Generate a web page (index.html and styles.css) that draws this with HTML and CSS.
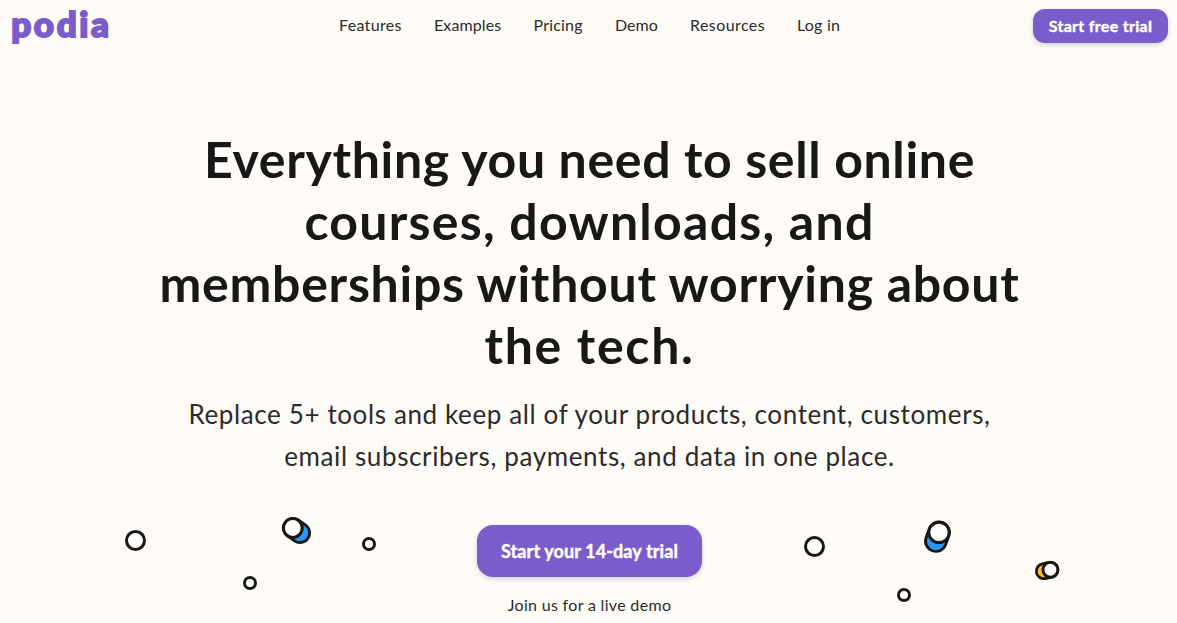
FILE: index.html
```html
<!DOCTYPE html>
<html lang="en">
<head>
<meta charset="utf-8">
<title>Podia</title>
<link rel="stylesheet" href="styles.css">
</head>
<body>
<header class="header">
  <a class="logo" aria-label="podia">
    <svg width="100" height="44" viewBox="0 0 100 44">
      <text class="logo-text" x="0.2" y="36.5" textLength="97.8" lengthAdjust="spacing">podia</text>
    </svg>
  </a>
  <nav class="nav">
    <a class="nav-link features">Features</a>
    <a class="nav-link examples">Examples</a>
    <a class="nav-link pricing">Pricing</a>
    <a class="nav-link demo">Demo</a>
    <a class="nav-link resources">Resources</a>
    <a class="nav-link login">Log in</a>
  </nav>
  <a class="button button-small">Start free trial</a>
</header>
<main class="hero">
  <h1 class="title">
    <span class="line t1">Everything you need to sell online</span>
    <span class="line t2">courses, downloads, and</span>
    <span class="line t3">memberships without worrying about</span>
    <span class="line t4">the tech.</span>
  </h1>
  <p class="subtitle">
    <span class="line">Replace 5+ tools and keep all of your products, content, customers,</span>
    <span class="line">email subscribers, payments, and data in one place.</span>
  </p>
  <a class="button button-large">Start your 14-day trial</a>
  <a class="demo-link">Join us for a live demo</a>
</main>
<svg class="confetti" width="1177" height="123" viewBox="0 500 1177 123" aria-hidden="true">
  <g class="ring">
    <circle cx="135.5" cy="540.5" r="9"/>
    <circle cx="250" cy="583" r="5.5"/>
    <circle cx="369" cy="544" r="5.5"/>
    <circle cx="814.5" cy="546.5" r="9"/>
    <circle cx="904" cy="595" r="5.5"/>
  </g>
  <g class="capsule">
    <path class="edge" stroke-width="22" d="M293.4 528.2 300 533"/>
    <path class="blue" stroke-width="16.4" d="M293.4 528.2 300 533"/>
    <path class="edge" stroke-width="23.6" d="M939 532.4 935.9 541"/>
    <path class="blue" stroke-width="18" d="M939 532.4 935.9 541"/>
    <path class="edge" stroke-width="17.8" d="M1050.4 569.8 1043.8 571.2"/>
    <path class="yellow" stroke-width="12.2" d="M1050.4 569.8 1043.8 571.2"/>
  </g>
  <g class="ring">
    <circle cx="292.8" cy="528" r="9.4"/>
    <circle cx="939" cy="532.4" r="10.2"/>
    <circle cx="1050.4" cy="569.8" r="7.5"/>
  </g>
</svg>
</body>
</html>
```

FILE: styles.css
```css
* { box-sizing: border-box; }
body {
  margin: 0;
  width: 1177px;
  height: 623px;
  overflow: hidden;
  position: relative;
  background: #fffcf7;
  color: #2b2b2b;
  font-family: Lato, "Open Sans", sans-serif;
}
.header {
  display: grid;
  grid-template-columns: 1fr auto 1fr;
  align-items: start;
  height: 128px;
  padding: 0 9px 0 11px;
}
.logo { display: block; height: 44px; }
.logo svg { display: block; overflow: visible; }
.logo-text {
  font-size: 35px;
  font-weight: 900;
  fill: #7a5ccc;
  stroke: #7a5ccc;
  stroke-width: 2px;
}
.nav { display: flex; gap: 32px; padding-top: 13px; }
.nav-link { font-size: 16px; line-height: 24px; white-space: nowrap; }
.features { width: 63px; letter-spacing: .32px; }
.examples { width: 67.5px; letter-spacing: .1px; }
.pricing { width: 49.5px; letter-spacing: .2px; }
.demo { width: 43px; letter-spacing: 0; }
.resources { width: 75px; letter-spacing: .43px; }
.login { width: 43px; letter-spacing: .2px; }
.button {
  display: flex;
  align-items: center;
  justify-content: center;
  background: #7a5ccc;
  color: #fff;
  font-weight: 700;
  white-space: nowrap;
  -webkit-text-stroke: .4px #fff;
  box-shadow: 0 2px 5px rgba(40, 30, 70, .2);
}
.button-small {
  justify-self: end;
  width: 135px;
  height: 34px;
  margin-top: 9px;
  padding-bottom: 2px;
  border-radius: 12px;
  font-size: 16px;
  letter-spacing: .3px;
}
.hero { display: flex; flex-direction: column; align-items: center; padding-left: 2px; }
.title {
  margin: 0;
  color: #181818;
  font-size: 50px;
  font-weight: 700;
  line-height: 62px;
  text-align: center;
}
.line { display: block; white-space: nowrap; }
.t1 { letter-spacing: .65px; }
.t2 { letter-spacing: 1.25px; }
.t3 { letter-spacing: .72px; }
.t4 { letter-spacing: 1.7px; }
.subtitle {
  margin: 17px 0 48px;
  font-size: 26px;
  line-height: 42px;
  letter-spacing: .62px;
  text-align: center;
}
.button-large {
  width: 225px;
  height: 52px;
  border-radius: 16px;
  font-size: 18px;
  letter-spacing: .1px;
}
.demo-link { margin-top: 16px; font-size: 16px; line-height: 24px; letter-spacing: .32px; }
.confetti { position: absolute; left: 0; top: 500px; pointer-events: none; }
.ring { fill: #fff; stroke: #181818; stroke-width: 3px; }
.capsule { fill: none; stroke-linecap: round; }
.edge { stroke: #181818; }
.blue { stroke: #2c94f5; }
.yellow { stroke: #fcc011; }
```
